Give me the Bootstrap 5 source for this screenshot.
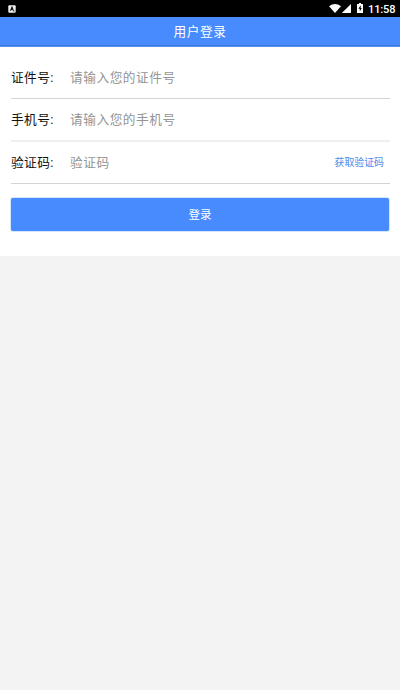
<!DOCTYPE html>
<html lang="zh-CN">
<head>
<meta charset="utf-8">
<meta name="viewport" content="width=device-width, initial-scale=1">
<title>用户登录</title>
<link href="https://cdn.jsdelivr.net/npm/bootstrap@5.3.0/dist/css/bootstrap.min.css" rel="stylesheet">
<style>
body{background:#f3f3f3;font-family:Roboto,"Noto Sans CJK SC",sans-serif;font-size:12.7px;letter-spacing:.53px;line-height:20px;color:#111}
.status-bar{height:17px;background:#000;padding:0 5px 0 8px}
.status-bar svg{display:block;flex:none}
.battery{margin:-1px 0 0 6px}
.clock{font:500 11px/16px Roboto,sans-serif;letter-spacing:-.1px;width:27px;margin-left:5px;padding-top:2px}
.app-bar{height:30px;background:linear-gradient(#488bff 28px,#3f78d8 28px,#3f78d8 29px,#5792f2 29px)}
.login-form{height:209px;padding:9px 10px 0 11px}
.field{height:42px;border-bottom:1px solid #d3d3d3}
.field.first-field{height:43px;padding-top:2px}
.field.soft{height:43px;border-bottom:2px solid #efefef}
.field label{width:59px;flex:none;letter-spacing:.4px}
.field .form-control{font-size:12.7px;letter-spacing:.53px;line-height:20px;height:20px;color:#111;box-shadow:none}
.field .form-control::placeholder{color:#959595;opacity:1}
.code-btn{font-size:9.9px;letter-spacing:0;line-height:20px;color:#4a8cef;margin-right:6px}
.login-btn{height:33px;margin:14px 1px 0 0;background:#488bff;border-radius:2px;box-shadow:0 0 0 .5px #a5c9ff;font-size:11.5px;letter-spacing:0;line-height:18px;color:#fff}
</style>
<script src="https://cdn.jsdelivr.net/npm/bootstrap@5.3.0/dist/js/bootstrap.bundle.min.js"></script>
</head>
<body>
<div class="status-bar d-flex align-items-center text-white">
  <svg class="me-auto" width="8" height="8" viewBox="0 0 8 8"><rect x=".3" y=".3" width="7.4" height="7.4" rx="1" fill="#eee"/><path d="M2 6 3.5 1.6h1L6 6H5L4.7 5H3.3L3 6z" fill="#111"/><path d="M5 5.2h1.5v1.4H5z" fill="#555"/></svg>
  <svg width="12" height="9" viewBox="0 0 12 9"><path d="M0 2.2Q6-2 12 2.2L6 9z" fill="#fff"/></svg>
  <svg width="10" height="9" viewBox="0 0 10 9"><path d="M10 0v9H.8z" fill="#fff"/></svg>
  <svg class="battery" width="6" height="10" viewBox="0 0 6 10"><path d="M2 0h2v1h2v9H0V1h2z" fill="#fff"/><path d="M3.7 2.2 1.4 5.8h1.4v2.6L4.8 5H3.7z" fill="#000"/></svg>
  <span class="clock">11:58</span>
</div>
<header class="app-bar d-flex align-items-center justify-content-center text-white">用户登录</header>
<form class="login-form bg-white">
  <div class="field first-field d-flex align-items-center">
    <label for="idno">证件号:</label>
    <input id="idno" class="form-control border-0 p-0 bg-transparent" placeholder="请输入您的证件号">
  </div>
  <div class="field soft d-flex align-items-center">
    <label for="phone">手机号:</label>
    <input id="phone" class="form-control border-0 p-0 bg-transparent" placeholder="请输入您的手机号">
  </div>
  <div class="field d-flex align-items-center">
    <label for="code">验证码:</label>
    <input id="code" class="form-control border-0 p-0 bg-transparent" placeholder="验证码">
    <button type="button" class="code-btn btn border-0 p-0 text-nowrap">获取验证码</button>
  </div>
  <div class="d-grid"><button type="button" class="login-btn btn border-0 p-0">登录</button></div>
</form>
</body>
</html>
